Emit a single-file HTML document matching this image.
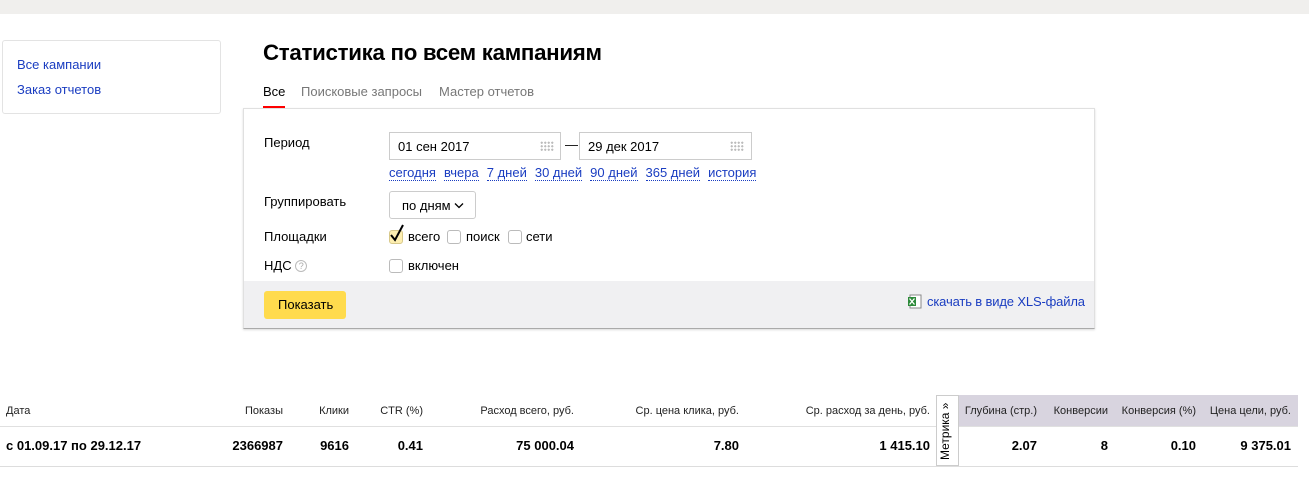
<!DOCTYPE html>
<html><head><meta charset="utf-8"><style>
*{margin:0;padding:0;box-sizing:border-box}
body{width:1309px;height:484px;position:relative;background:#fff;font-family:"Liberation Sans",sans-serif;color:#000;overflow:hidden}
.a{position:absolute;white-space:nowrap}
.lnk{color:#1a3dc1}
.dl{color:#1a3dc1;border-bottom:1px dotted #1a3dc1;font-size:13px;line-height:14px;margin-right:8px}
.inp{position:absolute;height:28px;border:1px solid #ccc;background:#fff;font-size:13px;padding:6px 8px}
.cb{position:absolute;width:14px;height:14px;border:1px solid #bbb;border-radius:3px;background:#fff}
.h{font-size:11px;color:#222;position:absolute;top:405px;white-space:nowrap}
.d{font-size:13px;font-weight:bold;position:absolute;top:438px;white-space:nowrap}
.grid{position:absolute;width:14px;height:10px;background:radial-gradient(circle,#bbb 1px,transparent 1.2px) 0 0/3.5px 3.5px}
</style></head><body>
<div class="a" style="left:0;top:0;width:1309px;height:14px;background:#f0efed"></div>
<div class="a" style="left:2px;top:40px;width:219px;height:74px;border:1px solid #e3e3e3;border-radius:3px"></div>
<div class="a lnk" style="left:17px;top:57px;font-size:13px">Все кампании</div>
<div class="a lnk" style="left:17px;top:82px;font-size:13px">Заказ отчетов</div>
<div class="a" style="left:263px;top:40px;font-size:22.3px;font-weight:bold;letter-spacing:-0.3px">Статистика по всем кампаниям</div>
<div class="a" style="left:263px;top:84px;font-size:13px">Все</div>
<div class="a" style="left:263px;top:106px;width:22px;height:2px;background:#f00"></div>
<div class="a" style="left:301px;top:84px;font-size:13px;color:#777">Поисковые запросы</div>
<div class="a" style="left:439px;top:84px;font-size:13px;color:#777">Мастер отчетов</div>
<div class="a" style="left:243px;top:108px;width:852px;height:221px;border:1px solid #e0e0e0;border-bottom:1px solid #aaa;box-shadow:0 1px 2px rgba(0,0,0,.15)"></div>
<div class="a" style="left:244px;top:281px;width:850px;height:47px;background:#f0f0f2"></div>
<div class="a" style="left:264px;top:135px;font-size:13px">Период</div>
<div class="inp" style="left:389px;top:132px;width:172px">01 сен 2017</div>
<div class="grid" style="left:540px;top:141px"></div>
<div class="a" style="left:565px;top:137px;font-size:13px">—</div>
<div class="inp" style="left:579px;top:132px;width:173px">29 дек 2017</div>
<div class="grid" style="left:730px;top:141px"></div>
<div class="a" style="left:389px;top:165px;font-size:13px">
<span class="dl">сегодня</span><span class="dl">вчера</span><span class="dl">7 дней</span><span class="dl">30 дней</span><span class="dl">90 дней</span><span class="dl">365 дней</span><span class="dl">история</span></div>
<div class="a" style="left:264px;top:194px;font-size:13px">Группировать</div>
<div class="a" style="left:389px;top:191px;width:87px;height:28px;border:1px solid #ccc;border-radius:3px;font-size:13px;padding:6px 0 0 12px">по дням <svg width="10" height="7" viewBox="0 0 10 7" style="vertical-align:1px"><path d="M1 1.5L5 5.5L9 1.5" fill="none" stroke="#000" stroke-width="1.3"/></svg></div>
<div class="a" style="left:264px;top:229px;font-size:13px">Площадки</div>
<div class="cb" style="left:389px;top:230px;background:#fdeeb0;border-color:#d8c98a"></div>
<svg class="a" style="left:389px;top:224px" width="16" height="18" viewBox="0 0 16 18"><path d="M2 11L6 16L14 1" fill="none" stroke="#000" stroke-width="2"/></svg>
<div class="a" style="left:408px;top:229px;font-size:13px">всего</div>
<div class="cb" style="left:447px;top:230px"></div>
<div class="a" style="left:466px;top:229px;font-size:13px">поиск</div>
<div class="cb" style="left:508px;top:230px"></div>
<div class="a" style="left:526px;top:229px;font-size:13px">сети</div>
<div class="a" style="left:264px;top:258px;font-size:13px">НДС <span style="display:inline-block;width:12px;height:12px;border:1px solid #bbb;border-radius:50%;font-size:9px;color:#aaa;text-align:center;line-height:11px;vertical-align:1px">?</span></div>
<div class="cb" style="left:389px;top:259px"></div>
<div class="a" style="left:408px;top:258px;font-size:13px">включен</div>
<div class="a" style="left:264px;top:291px;width:82px;height:28px;background:#ffdb4d;border-radius:3px;font-size:13px;padding:6px 0 0 14px">Показать</div>
<svg class="a" style="left:907px;top:294px" width="15" height="15" viewBox="0 0 15 15"><rect x="3" y="1" width="11" height="13" fill="#fff" stroke="#888"/><rect x="1" y="3" width="8" height="9" fill="#2d8a3a"/><path d="M2.5 4.5L7.5 10.5M7.5 4.5L2.5 10.5" stroke="#fff" stroke-width="1.3"/></svg>
<div class="a lnk" style="left:927px;top:294px;font-size:13px;letter-spacing:-0.15px">скачать в виде XLS-файла</div>
<div class="a" style="left:959px;top:395px;width:339px;height:31px;background:#d8d4df"></div>
<div class="a" style="left:0;top:426px;width:1298px;height:1px;background:#e0e0e0"></div>
<div class="a" style="left:0;top:466px;width:1298px;height:1px;background:#ddd"></div>
<div class="a" style="left:936px;top:395px;width:23px;height:71px;border:1px solid #ccc;background:#fff"></div>
<div class="a" style="left:938px;top:460px;font-size:12px;transform:rotate(-90deg);transform-origin:0 0;width:64px">Метрика »</div>
<div class="h" style="left:6px">Дата</div>
<div class="h" style="right:1026px">Показы</div>
<div class="h" style="right:960px">Клики</div>
<div class="h" style="right:886px">CTR (%)</div>
<div class="h" style="right:735px">Расход всего, руб.</div>
<div class="h" style="right:570px">Ср. цена клика, руб.</div>
<div class="h" style="right:379px">Ср. расход за день, руб.</div>
<div class="h" style="right:272px">Глубина (стр.)</div>
<div class="h" style="right:201px">Конверсии</div>
<div class="h" style="right:113px">Конверсия (%)</div>
<div class="h" style="right:18px">Цена цели, руб.</div>
<div class="d" style="left:6px">с 01.09.17 по 29.12.17</div>
<div class="d" style="right:1026px">2366987</div>
<div class="d" style="right:960px">9616</div>
<div class="d" style="right:886px">0.41</div>
<div class="d" style="right:735px">75 000.04</div>
<div class="d" style="right:570px">7.80</div>
<div class="d" style="right:379px">1 415.10</div>
<div class="d" style="right:272px">2.07</div>
<div class="d" style="right:201px">8</div>
<div class="d" style="right:113px">0.10</div>
<div class="d" style="right:18px">9 375.01</div>
</body></html>
